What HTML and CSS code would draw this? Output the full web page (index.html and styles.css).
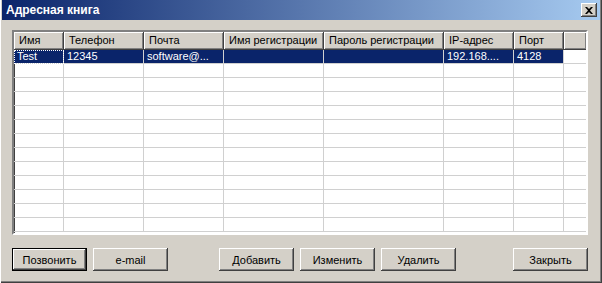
FILE: index.html
```html
<!DOCTYPE html>
<html lang="ru">
<head>
    <meta charset="UTF-8">
    <title>Адресная книга</title>
    <link rel="stylesheet" href="styles.css">
</head>
<body>
    <div class="window">
        <div class="titlebar">
            <span class="title">Адресная книга</span>
            <button class="close-btn" type="button">
                <svg width="8" height="7" viewBox="0 0 8 7">
                    <path d="M0 0h2l2 2 2-2h2L5 3.5 8 7H6L4 5 2 7H0l3-3.5z" fill="#000"/>
                </svg>
            </button>
        </div>

        <div class="content">
            <div class="listview">
                <div class="row header">
                    <div class="cell">Имя</div>
                    <div class="cell">Телефон</div>
                    <div class="cell">Почта</div>
                    <div class="cell">Имя регистрации</div>
                    <div class="cell">Пароль регистрации</div>
                    <div class="cell">IP-адрес</div>
                    <div class="cell">Порт</div>
                    <div class="cell filler"></div>
                </div>

                <!-- the one saved contact, selected -->
                <div class="row selected">
                    <div class="cell">Test</div>
                    <div class="cell">12345</div>
                    <div class="cell">software@...</div>
                    <div class="cell"></div>
                    <div class="cell"></div>
                    <div class="cell">192.168....</div>
                    <div class="cell">4128</div>
                    <div class="cell filler"></div>
                </div>

                <div class="row"><div class="cell"></div><div class="cell"></div><div class="cell"></div><div class="cell"></div><div class="cell"></div><div class="cell"></div><div class="cell"></div><div class="cell filler"></div></div>
                <div class="row"><div class="cell"></div><div class="cell"></div><div class="cell"></div><div class="cell"></div><div class="cell"></div><div class="cell"></div><div class="cell"></div><div class="cell filler"></div></div>
                <div class="row"><div class="cell"></div><div class="cell"></div><div class="cell"></div><div class="cell"></div><div class="cell"></div><div class="cell"></div><div class="cell"></div><div class="cell filler"></div></div>
                <div class="row"><div class="cell"></div><div class="cell"></div><div class="cell"></div><div class="cell"></div><div class="cell"></div><div class="cell"></div><div class="cell"></div><div class="cell filler"></div></div>
                <div class="row"><div class="cell"></div><div class="cell"></div><div class="cell"></div><div class="cell"></div><div class="cell"></div><div class="cell"></div><div class="cell"></div><div class="cell filler"></div></div>
                <div class="row"><div class="cell"></div><div class="cell"></div><div class="cell"></div><div class="cell"></div><div class="cell"></div><div class="cell"></div><div class="cell"></div><div class="cell filler"></div></div>
                <div class="row"><div class="cell"></div><div class="cell"></div><div class="cell"></div><div class="cell"></div><div class="cell"></div><div class="cell"></div><div class="cell"></div><div class="cell filler"></div></div>
                <div class="row"><div class="cell"></div><div class="cell"></div><div class="cell"></div><div class="cell"></div><div class="cell"></div><div class="cell"></div><div class="cell"></div><div class="cell filler"></div></div>
                <div class="row"><div class="cell"></div><div class="cell"></div><div class="cell"></div><div class="cell"></div><div class="cell"></div><div class="cell"></div><div class="cell"></div><div class="cell filler"></div></div>
                <div class="row"><div class="cell"></div><div class="cell"></div><div class="cell"></div><div class="cell"></div><div class="cell"></div><div class="cell"></div><div class="cell"></div><div class="cell filler"></div></div>
                <div class="row"><div class="cell"></div><div class="cell"></div><div class="cell"></div><div class="cell"></div><div class="cell"></div><div class="cell"></div><div class="cell"></div><div class="cell filler"></div></div>
                <div class="row"><div class="cell"></div><div class="cell"></div><div class="cell"></div><div class="cell"></div><div class="cell"></div><div class="cell"></div><div class="cell"></div><div class="cell filler"></div></div>
            </div>

            <div class="buttons">
                <div class="group">
                    <button class="btn default" type="button">Позвонить</button>
                    <button class="btn" type="button">e-mail</button>
                </div>
                <div class="group middle">
                    <button class="btn" type="button">Добавить</button>
                    <button class="btn" type="button">Изменить</button>
                    <button class="btn" type="button">Удалить</button>
                </div>
                <button class="btn close" type="button">Закрыть</button>
            </div>
        </div>
    </div>
</body>
</html>
```

FILE: styles.css
```css
body {
    margin: 0;
    background-color: #d4d0c8;
    font-family: "Liberation Sans", Arial, sans-serif;
    font-size: 11px;
    color: #000;
}

.window {
    width: 602px;
    height: 283px;
    box-sizing: border-box;
    background-color: #d4d0c8;
    display: flex;
    flex-direction: column;
    padding: 0 2px 2px 2px;
    box-shadow: inset 1px 0 #fff, inset -1px -1px #404040, inset -2px -2px #808080;
}

.titlebar {
    height: 20px;
    display: flex;
    align-items: center;
    justify-content: space-between;
    padding: 0 3px 0 4px;
    margin-bottom: 10px;
    background: linear-gradient(to right, #0a246a, #a6caf0);
}

.title {
    color: #fff;
    font-weight: bold;
    font-size: 12px;
}

.close-btn {
    width: 16px;
    height: 14px;
    padding: 0;
    border: none;
    background-color: #d4d0c8;
    display: flex;
    align-items: center;
    justify-content: center;
    box-shadow: inset -1px -1px #404040, inset 1px 1px #fff, inset -2px -2px #808080;
}

.content {
    flex: 1;
    display: flex;
    flex-direction: column;
    padding: 0 12px 0 10px;
}

.listview {
    height: 201px;
    overflow: hidden;
    background-color: #fff;
    border: 2px solid;
    border-color: #808080 #fff #fff #808080;
    box-shadow: inset 1px 1px #404040;
}

.row {
    display: grid;
    grid-template-columns: 50px 80px 80px 100px 120px 70px 50px 1fr;
    height: 14px;
}

.row .cell {
    box-sizing: border-box;
    border-right: 1px solid #d0d0d0;
    border-bottom: 1px solid #d0d0d0;
    padding: 0 0 0 3px;
    line-height: 13px;
    white-space: nowrap;
    overflow: hidden;
}

.row .filler {
    border-right: none;
}

.header {
    height: 18px;
}

.header .cell {
    background-color: #d4d0c8;
    border-right: 1px solid #404040;
    border-bottom: 1px solid #404040;
    box-shadow: inset 1px 1px #fff, inset -1px -1px #808080;
    padding-left: 5px;
    line-height: 17px;
}

.header .filler {
    border-right: none;
}

.selected .cell {
    background-color: #0a246a;
    color: #fff;
}

.selected .cell:first-child {
    outline: 1px dotted #fff;
    outline-offset: -1px;
}

.selected .filler {
    background-color: #fff;
}

.buttons {
    display: flex;
    margin-top: 13px;
}

.group {
    display: flex;
    gap: 6px;
}

.middle {
    margin-left: 51px;
}

.close {
    margin-left: auto;
}

.btn {
    width: 75px;
    height: 23px;
    padding: 0;
    border: none;
    background-color: #d4d0c8;
    font-family: "Liberation Sans", Arial, sans-serif;
    font-size: 11px;
    color: #000;
    box-shadow: inset -1px -1px #404040, inset 1px 1px #fff, inset -2px -2px #808080, inset 2px 2px #d4d0c8;
}

.btn.default {
    border: 1px solid #000;
    box-shadow: inset -1px -1px #404040, inset 1px 1px #fff, inset -2px -2px #808080;
}
```
